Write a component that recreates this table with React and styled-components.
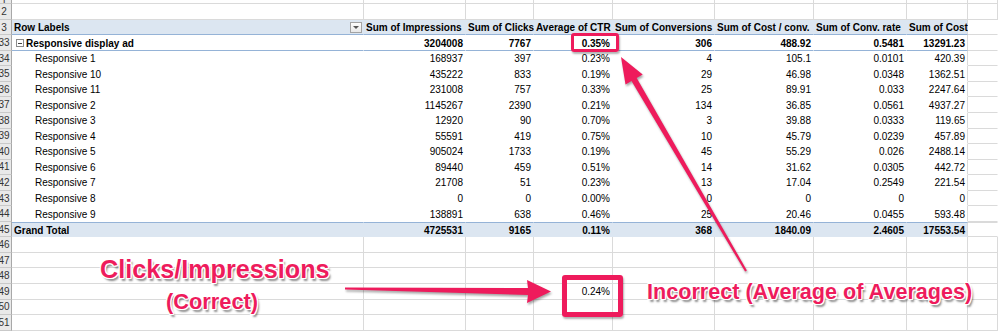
import React from "react";
import styled, { createGlobalStyle } from "styled-components";

const GRID = "#dadada";
const PIVOT_LINE = "#95b3d7";
const PIVOT_FILL = "#dce6f1";
const PINK = "#ee1b5c";
const COLS = "12px 352px 102px 68px 79px 102px 99px 93px 61px 1fr";
const ROW_H = 15.55;

const GlobalStyle = createGlobalStyle`
	body {
		margin: 0;
		background: #fff;
		overflow: hidden;
	}
`;

const Sheet = styled.div`
	position: relative;
	display: flex;
	flex-direction: column;
	width: 998px;
	height: 332px;
	overflow: hidden;
	font-family: "Liberation Sans", Arial, sans-serif;
	font-size: 10px;
	color: #000;
`;

const Row = styled.div`
	display: grid;
	grid-template-columns: ${COLS};
	height: ${p => p.$h}px;
	flex: none;
`;

const RowHead = styled.div`
	box-sizing: border-box;
	display: flex;
	align-items: center;
	overflow: hidden;
	background: #e9e9e9;
	border-right: 1px solid #a8a8a8;
	border-bottom: 1px solid #c9c9c9;
	color: #333;

	span {
		display: block;
		flex: none;
		width: 16px;
		margin-left: -4px;
		text-align: center;
	}
`;

const Cell = styled.div`
	box-sizing: border-box;
	display: flex;
	align-items: center;
	justify-content: ${p => (p.$right ? "flex-end" : "flex-start")};
	padding: 1px 2px 0 ${p => p.$indent || 2}px;
	white-space: nowrap;
	font-weight: ${p => (p.$bold ? 700 : 400)};
	background: ${p => p.$bg || "#fff"};
	border-right: 1px solid ${p => (p.$vline ? GRID : "transparent")};
	border-bottom: 1px solid ${p => p.$bottom || "transparent"};
	border-top: ${p => (p.$top ? `1px solid ${p.$top}` : "none")};
`;

const HeadCell = styled(Cell)`
	justify-content: space-between;
	padding-right: 1px;
`;

const FilterButton = styled.span`
	box-sizing: border-box;
	width: 12px;
	height: 11px;
	display: flex;
	align-items: center;
	justify-content: center;
	border: 1px solid #a3a3a3;
	background: linear-gradient(#fdfdfd, #e8e8e8);

	&::after {
		content: "";
		border-left: 3px solid transparent;
		border-right: 3px solid transparent;
		border-top: 3px solid #555;
	}
`;

const Toggle = styled.span`
	box-sizing: border-box;
	width: 8px;
	height: 8px;
	margin-right: 2px;
	display: inline-flex;
	align-items: center;
	justify-content: center;
	border: 1px solid #8c8c8c;
	background: #fff;

	&::after {
		content: "";
		width: 4px;
		height: 1px;
		background: #444;
	}
`;

const Overlay = styled.svg`
	position: absolute;
	left: 0;
	top: 0;
	width: 998px;
	height: 332px;
	pointer-events: none;

	polygon {
		fill: ${PINK};
		filter: drop-shadow(1px 2px 1px rgba(0, 0, 0, 0.35));
	}
`;

const Callout = styled.div`
	position: absolute;
	box-sizing: border-box;
	left: ${p => p.$x}px;
	top: ${p => p.$y}px;
	width: ${p => p.$w}px;
	height: ${p => p.$h}px;
	border: ${p => p.$b}px solid ${PINK};
	border-radius: 3px;
	box-shadow: 1px 2px 2px rgba(0, 0, 0, 0.3);
	pointer-events: none;
`;

const Note = styled.div`
	position: absolute;
	left: ${p => p.$x}px;
	top: ${p => p.$y}px;
	font-family: "Liberation Sans", Arial, sans-serif;
	font-weight: 700;
	font-size: ${p => p.$size}px;
	line-height: 1;
	white-space: nowrap;
	color: ${PINK};
	text-shadow: -1px -1px 0 #fff, 1px -1px 0 #fff, -1px 1px 0 #fff, 1px 1px 0 #fff,
		0 -1px 0 #fff, 0 1px 0 #fff, -1px 0 0 #fff, 1px 0 0 #fff,
		2px 3px 2px rgba(0, 0, 0, 0.45);
`;

const headers = [
	"Sum of Impressions",
	"Sum of Clicks",
	"Average of CTR",
	"Sum of Conversions",
	"Sum of Cost / conv.",
	"Sum of Conv. rate",
	"Sum of Cost"
];

const items = [
	["34", "Responsive 1", "168937", "397", "0.23%", "4", "105.1", "0.0101", "420.39"],
	["35", "Responsive 10", "435222", "833", "0.19%", "29", "46.98", "0.0348", "1362.51"],
	["36", "Responsive 11", "231008", "757", "0.33%", "25", "89.91", "0.033", "2247.64"],
	["37", "Responsive 2", "1145267", "2390", "0.21%", "134", "36.85", "0.0561", "4937.27"],
	["38", "Responsive 3", "12920", "90", "0.70%", "3", "39.88", "0.0333", "119.65"],
	["39", "Responsive 4", "55591", "419", "0.75%", "10", "45.79", "0.0239", "457.89"],
	["40", "Responsive 5", "905024", "1733", "0.19%", "45", "55.29", "0.026", "2488.14"],
	["41", "Responsive 6", "89440", "459", "0.51%", "14", "31.62", "0.0305", "442.72"],
	["42", "Responsive 7", "21708", "51", "0.23%", "13", "17.04", "0.2549", "221.54"],
	["43", "Responsive 8", "0", "0", "0.00%", "0", "0", "0", "0"],
	["44", "Responsive 9", "138891", "638", "0.46%", "25", "20.46", "0.0455", "593.48"]
];

const subtotal = ["3204008", "7767", "0.35%", "306", "488.92", "0.5481", "13291.23"];
const total = ["4725531", "9165", "0.11%", "368", "1840.09", "2.4605", "17553.54"];

const BlankRow = ({ n, h = ROW_H, values = {} }) => (
	<Row $h={h}>
		<RowHead>
			<span>{n}</span>
		</RowHead>
		{Array.from({ length: 9 }, (_, i) => (
			<Cell key={i} $vline $bottom={GRID} $right>
				{values[i + 1]}
			</Cell>
		))}
	</Row>
);

const PivotRow = ({ n, label, values, bold, indent, bg, bottom, top, toggle }) => (
	<Row $h={ROW_H}>
		<RowHead>
			<span>{n}</span>
		</RowHead>
		<Cell $bold={bold} $indent={indent} $bg={bg} $bottom={bottom} $top={top}>
			{toggle && <Toggle />}
			{label}
		</Cell>
		{values.map((v, i) => (
			<Cell
				key={i}
				$right
				$bold={bold}
				$bg={bg}
				$bottom={bottom}
				$top={top}
				$vline={i === values.length - 1}
			>
				{v}
			</Cell>
		))}
		<Cell $bottom={GRID} $top={top ? GRID : null} />
	</Row>
);

const App = () => {
	return (
		<Sheet>
			<GlobalStyle />
			<BlankRow n="1" h={4.2} />
			<BlankRow n="2" />
			<Row $h={ROW_H}>
				<RowHead>
					<span>3</span>
				</RowHead>
				<HeadCell $bold $bg={PIVOT_FILL} $bottom={PIVOT_LINE}>
					Row Labels
					<FilterButton />
				</HeadCell>
				{headers.map((h, i) => (
					<Cell
						key={h}
						$bold
						$bg={PIVOT_FILL}
						$bottom={PIVOT_LINE}
						$vline={i === headers.length - 1}
					>
						{h}
					</Cell>
				))}
				<Cell $bottom={GRID} />
			</Row>
			<PivotRow
				n="33"
				label="Responsive display ad"
				values={subtotal}
				bold
				indent={4}
				bottom={PIVOT_LINE}
				toggle
			/>
			{items.map(([n, label, ...values]) => (
				<PivotRow key={n} n={n} label={label} values={values} indent={23} />
			))}
			<PivotRow
				n="45"
				label="Grand Total"
				values={total}
				bold
				bg={PIVOT_FILL}
				top={PIVOT_LINE}
			/>
			<BlankRow n="46" />
			<BlankRow n="47" />
			<BlankRow n="48" />
			<BlankRow n="49" values={{ 4: "0.24%" }} />
			<BlankRow n="50" />
			<BlankRow n="51" />

			<Overlay viewBox="0 0 998 332">
				<polygon points="621,57 642.7,74.5 636.7,78 746.9,270.5 745.1,271.5 631.5,81 625.5,84.5" />
				<polygon points="345,287.5 528,288 527,280 551,291.5 527,303 528,295 345,289.5" />
			</Overlay>
			<Callout $x={571} $y={33} $w={48} $h={19} $b={3.5} />
			<Callout $x={562} $y={275} $w={61} $h={42} $b={5} />
			<Note $x={100} $y={256.5} $size={25.2}>
				Clicks/Impressions
			</Note>
			<Note $x={166} $y={290.5} $size={21.8}>
				(Correct)
			</Note>
			<Note $x={647} $y={281} $size={21.6}>
				Incorrect (Average of Averages)
			</Note>
		</Sheet>
	);
};

export default App;
